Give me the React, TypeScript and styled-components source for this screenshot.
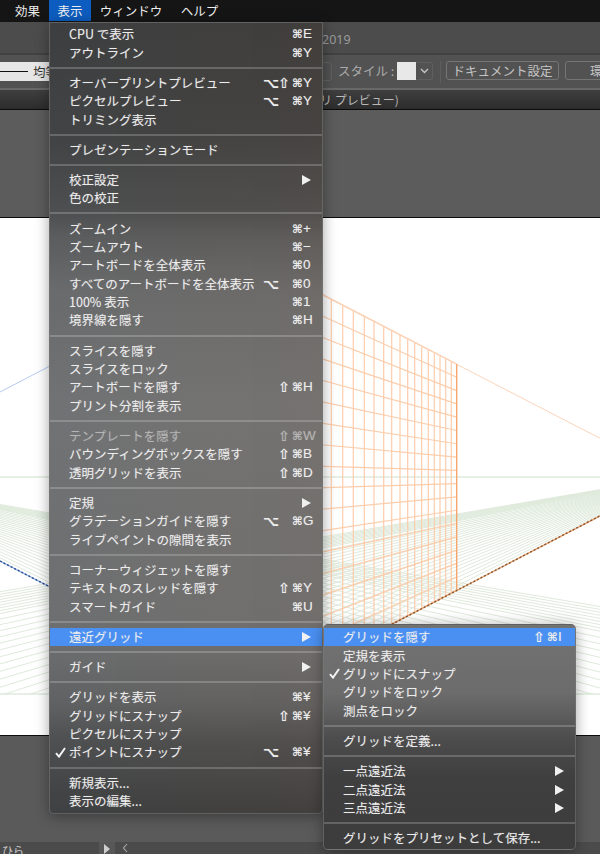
import React from "react";
import styled, { createGlobalStyle } from "styled-components";

const Global = createGlobalStyle`
  html, body { margin: 0; padding: 0; background: #5c5c5c; }
  body { font-family: "Noto Sans CJK JP", "Noto Sans", sans-serif; }
`;

const Page = styled.div`
  position: relative;
  width: 600px;
  height: 854px;
  overflow: hidden;
  display: flex;
  flex-direction: column;
  background: #5c5c5c;
`;

const MenuBar = styled.div`
  height: 22px;
  flex: none;
  display: flex;
  background: #151515;
  padding-left: 6px;
`;

const BarItem = styled.div<{ $active?: boolean; $w: number }>`
  width: ${(p) => p.$w}px;
  flex: none;
  text-align: center;
  font-size: 12.5px;
  line-height: 21px;
  height: 21px;
  color: #eeeeee;
  background: ${(p) => (p.$active ? "#0d5dc0" : "transparent")};
`;

const TitleRow = styled.div`
  height: 33px;
  flex: none;
  box-sizing: border-box;
  padding: 9px 0 0 322px;
  background: #4c4c4c;
  border-bottom: 2px solid #414141;
  font-family: "Noto Sans", sans-serif;
  font-size: 12.5px;
  line-height: 17px;
  color: #9b9b9b;
`;

const ControlBar = styled.div`
  height: 35px;
  flex: none;
  box-sizing: border-box;
  padding: 6px 0 0;
  display: flex;
  align-items: flex-start;
  overflow: hidden;
  background: #525252;
  border-bottom: 2px solid #686868;
  color: #bdbdbd;
  font-size: 12.5px;
`;

const StrokeBox = styled.div`
  width: 70px;
  height: 19px;
  flex: none;
  margin-top: 1px;
  display: flex;
  align-items: center;
  gap: 5px;
  background: #e6e6e6;
  color: #333333;
  overflow: hidden;
  white-space: nowrap;
`;

const StrokeLine = styled.span`
  width: 28px;
  height: 1.5px;
  flex: none;
  background: #111111;
`;

const SmallSelect = styled.div`
  width: 22px;
  height: 19px;
  flex: none;
  box-sizing: border-box;
  margin: 1px 0 0 240px;
  border: 1px solid #626262;
  border-radius: 0 3px 3px 0;
`;

const StyleLabel = styled.span`
  flex: none;
  width: 59px;
  margin-left: 6px;
  line-height: 20px;
  white-space: nowrap;
  color: #ababab;
`;

const Swatch = styled.span`
  width: 19px;
  height: 18px;
  flex: none;
  margin-top: 1px;
  background: #e8e8e8;
`;

const SwatchMenu = styled.span`
  width: 17px;
  height: 18px;
  flex: none;
  box-sizing: border-box;
  margin-top: 1px;
  border: 1px solid #5f5f5f;
  border-left: none;
  border-radius: 0 3px 3px 0;
  display: flex;
  align-items: center;
  justify-content: center;
`;

const Divider = styled.span`
  width: 1px;
  height: 22px;
  flex: none;
  margin: 0 5px 0 7px;
  background: #5e5e5e;
`;

const ToolButton = styled.div<{ $w: number }>`
  width: ${(p) => p.$w}px;
  height: 19px;
  flex: none;
  box-sizing: border-box;
  margin: 0 6px 0 0;
  border: 1px solid #757575;
  border-radius: 3px;
  text-align: center;
  font-size: 12.5px;
  line-height: 17px;
  color: #c4c4c4;
  white-space: nowrap;
`;

const TabBar = styled.div`
  height: 20px;
  flex: none;
  box-sizing: border-box;
  padding-left: 320px;
  background: linear-gradient(#3f3f3f, #2c2c2c);
  border-bottom: 1px solid #0c0c0c;
  font-size: 12px;
  line-height: 19px;
  color: #b9b9b9;
  white-space: nowrap;
`;

const CanvasTop = styled.div`
  height: 108px;
  flex: none;
  box-sizing: border-box;
  background: #5c5c5c;
  border-bottom: 1px solid #0c0c0c;
`;

const Artboard = styled.div`
  height: 518px;
  flex: none;
  box-sizing: border-box;
  background: #ffffff;
  border-bottom: 1px solid #0c0c0c;
  svg { display: block; }
`;

const CanvasBottom = styled.div`
  flex: 1;
  background: #5a5a5a;
`;

const StatusBar = styled.div`
  height: 12px;
  flex: none;
  display: flex;
  overflow: hidden;
  background: #4b4b4b;
  color: #c9c9c9;
  font-size: 11px;
`;

const StatusText = styled.span`
  width: 99px;
  flex: none;
  padding-left: 2px;
  box-sizing: border-box;
  line-height: 16px;
`;

const StatusPlay = styled.span`
  width: 16px;
  flex: none;
  background: #575757;
  display: flex;
  align-items: center;
  justify-content: center;
`;

const PlayMark = styled.span`
  width: 0;
  height: 0;
  margin-top: 2px;
  border-left: 6px solid #cfcfcf;
  border-top: 5px solid transparent;
  border-bottom: 5px solid transparent;
`;

const StatusBack = styled.span`
  margin-left: 7px;
  display: flex;
  align-items: center;
`;

const Panel = styled.div`
  position: absolute;
  box-sizing: border-box;
  box-shadow: 0 2px 14px rgba(0, 0, 0, 0.36);
  border: 1px solid rgba(120, 120, 120, 0.6);
`;

const MainMenu = styled(Panel)`
  left: 49px;
  top: 22px;
  width: 274px;
  height: 792px;
  padding-top: 2px;
  border-radius: 0 0 5px 5px;
  background:
    linear-gradient(90deg, rgba(90, 115, 135, 0.07), rgba(150, 115, 85, 0.08)),
    linear-gradient(
      #3a3a3a 0%,
      #3f3f3f 14%,
      #4c4c4c 24%,
      #5a5a5a 27%,
      #6a6a6a 34%,
      #727272 48%,
      #6e6e6e 78%,
      #606060 86%,
      #4c4c4c 91%,
      #3c3c3c 100%
    );
`;

const SubMenu = styled(Panel)`
  left: 323px;
  top: 624px;
  width: 253px;
  height: 226px;
  padding-top: 3px;
  border-radius: 5px;
  background: linear-gradient(
    #727272 0%,
    #6c6c6c 30%,
    #5e5e5e 40%,
    #4d4d4d 50%,
    #3f3f3f 68%,
    #3c3c3c 100%
  );
`;

const Row = styled.div<{ $on?: boolean; $off?: boolean }>`
  height: 18.4px;
  display: flex;
  align-items: center;
  padding-right: 11px;
  font-size: 12.5px;
  line-height: 18px;
  white-space: nowrap;
  text-shadow: 0 0 1px rgba(255, 255, 255, 0.3);
  color: ${(p) => (p.$off ? "rgba(255,255,255,0.32)" : "#ececec")};
  background: ${(p) => (p.$on ? "#4a90f2" : "transparent")};
`;

const CheckCell = styled.span`
  width: 19px;
  flex: none;
  display: flex;
  justify-content: center;
  padding-left: 1px;
  box-sizing: border-box;
`;

const Label = styled.span`
  flex: 1;
`;

const Shortcut = styled.span<{ $tail: number; $key: number }>`
  display: grid;
  grid-template-columns: 15px 14px 11px ${(p) => p.$key}px;
  margin-right: ${(p) => p.$tail}px;
  line-height: 18px;
`;

const ModKey = styled.span<{ $size: number }>`
  font-family: "DejaVu Sans", sans-serif;
  font-size: ${(p) => p.$size}px;
  font-weight: 700;
  line-height: 18px;
  overflow: visible;
`;

const KeyCap = styled.span`
  font-family: "Liberation Sans", sans-serif;
  font-size: 13.5px;
  font-weight: 400;
`;

const Arrow = styled.span`
  width: 0;
  height: 0;
  border-left: 9px solid #f0f0f0;
  border-top: 5px solid transparent;
  border-bottom: 5px solid transparent;
`;

const Sep = styled.div`
  height: 11.8px;
  display: flex;
  align-items: center;
  &::after {
    content: "";
    display: block;
    width: 100%;
    height: 2px;
    background: rgba(255, 255, 255, 0.2);
  }
`;

type Item = {
  t: string;
  k?: string;
  arrow?: boolean;
  check?: boolean;
  on?: boolean;
  off?: boolean;
};

const mainGroups: Item[][] = [
  [{ t: "CPU で表示", k: "⌘E" }, { t: "アウトライン", k: "⌘Y" }],
  [
    { t: "オーバープリントプレビュー", k: "⌥⇧⌘Y" },
    { t: "ピクセルプレビュー", k: "⌥⌘Y" },
    { t: "トリミング表示" },
  ],
  [{ t: "プレゼンテーションモード" }],
  [{ t: "校正設定", arrow: true }, { t: "色の校正" }],
  [
    { t: "ズームイン", k: "⌘+" },
    { t: "ズームアウト", k: "⌘−" },
    { t: "アートボードを全体表示", k: "⌘0" },
    { t: "すべてのアートボードを全体表示", k: "⌥⌘0" },
    { t: "100% 表示", k: "⌘1" },
    { t: "境界線を隠す", k: "⌘H" },
  ],
  [
    { t: "スライスを隠す" },
    { t: "スライスをロック" },
    { t: "アートボードを隠す", k: "⇧⌘H" },
    { t: "プリント分割を表示" },
  ],
  [
    { t: "テンプレートを隠す", k: "⇧⌘W", off: true },
    { t: "バウンディングボックスを隠す", k: "⇧⌘B" },
    { t: "透明グリッドを表示", k: "⇧⌘D" },
  ],
  [
    { t: "定規", arrow: true },
    { t: "グラデーションガイドを隠す", k: "⌥⌘G" },
    { t: "ライブペイントの隙間を表示" },
  ],
  [
    { t: "コーナーウィジェットを隠す" },
    { t: "テキストのスレッドを隠す", k: "⇧⌘Y" },
    { t: "スマートガイド", k: "⌘U" },
  ],
  [{ t: "遠近グリッド", arrow: true, on: true }],
  [{ t: "ガイド", arrow: true }],
  [
    { t: "グリッドを表示", k: "⌘¥" },
    { t: "グリッドにスナップ", k: "⇧⌘¥" },
    { t: "ピクセルにスナップ" },
    { t: "ポイントにスナップ", k: "⌥⌘¥", check: true },
  ],
  [{ t: "新規表示..." }, { t: "表示の編集..." }],
];

const subGroups: Item[][] = [
  [
    { t: "グリッドを隠す", k: "⇧⌘I", on: true },
    { t: "定規を表示" },
    { t: "グリッドにスナップ", check: true },
    { t: "グリッドをロック" },
    { t: "測点をロック" },
  ],
  [{ t: "グリッドを定義..." }],
  [
    { t: "一点遠近法", arrow: true },
    { t: "二点遠近法", arrow: true },
    { t: "三点遠近法", arrow: true },
  ],
  [{ t: "グリッドをプリセットとして保存..." }],
];

const Check = () => (
  <svg width="11" height="11" viewBox="0 0 11 11">
    <path d="M1 6.2 L4 9.6 L10 1" fill="none" stroke="#f2f2f2" strokeWidth="2" />
  </svg>
);

const Keys = ({ k, tail, keyW }: { k: string; tail: number; keyW: number }) => {
  const chars = Array.from(k);
  return (
    <Shortcut $tail={tail} $key={keyW}>
      <ModKey $size={14}>{chars.includes("⌥") ? "⌥" : ""}</ModKey>
      <ModKey $size={14}>{chars.includes("⇧") ? "⇧" : ""}</ModKey>
      <ModKey $size={11.5}>⌘</ModKey>
      <KeyCap>{chars[chars.length - 1]}</KeyCap>
    </Shortcut>
  );
};

const MenuList = ({ groups, tail, keyW }: { groups: Item[][]; tail: number; keyW: number }) => (
  <>
    {groups.map((g, i) => (
      <React.Fragment key={i}>
        {i > 0 && <Sep />}
        {g.map((it) => (
          <Row key={it.t} $on={it.on} $off={it.off}>
            <CheckCell>{it.check && <Check />}</CheckCell>
            <Label>{it.t}</Label>
            {it.k && <Keys k={it.k} tail={tail} keyW={keyW} />}
            {it.arrow && <Arrow />}
          </Row>
        ))}
      </React.Fragment>
    ))}
  </>
);

const RX = 675;
const LX = -162;
const HY = 477;

const slopes: number[] = [];
for (let s = 0.17; s < 0.525; s *= s < 0.2 ? 1.022 : 1.04) slopes.push(s);

const wallXs = [
  331.3, 342.7, 353.3, 364.3, 374, 383.7, 391.7, 400, 407.7, 414.7, 421.7, 428.3, 434.3, 440,
  445.7, 451.3,
];

const Drawing = () => {
  const edgeX = 456.7;
  const topAt = (x: number) => HY - 0.516 * (RX - x);
  const botAt = (x: number) => HY + 0.518 * (RX - x);
  const rows = Array.from({ length: 18 }, (_, i) => 364 + (i * 226) / 17);
  return (
    <svg width="600" height="517" viewBox="0 218 600 517">
      <defs>
        <clipPath id="floor">
          <rect x="0" y="477" width="600" height="217" />
        </clipPath>
      </defs>
      <g clipPath="url(#floor)" stroke="#dfeadc" strokeWidth="1" fill="none">
        {slopes.map((s) => (
          <path key={`r${s}`} d={`M${RX} ${HY} L-20 ${HY + s * (RX + 20)}`} />
        ))}
        {slopes.map((s) => (
          <path key={`l${s}`} d={`M${LX} ${HY} L620 ${HY + s * (620 - LX)}`} />
        ))}
      </g>
      <path d="M0 477 H600 M0 694 H600" stroke="#cde0ca" strokeWidth="1" fill="none" />
      <g stroke="#fccdab" strokeWidth="1.2" fill="none">
        {wallXs.map((x) => (
          <path key={x} d={`M${x} ${topAt(x)} V${botAt(x)}`} />
        ))}
        {rows.map((y) => (
          <path key={y} d={`M${edgeX} ${y} L300 ${HY + ((y - HY) * (RX - 300)) / (RX - edgeX)}`} />
        ))}
      </g>
      <path d={`M300 ${topAt(300)} L600 ${topAt(600)}`} stroke="#fcd5ba" strokeWidth="1" />
      <path d={`M${edgeX} ${topAt(edgeX)} V${botAt(edgeX)}`} stroke="#f6a266" strokeWidth="1.3" />
      <path d={`M257 694.5 L600 ${botAt(600)}`} stroke="#f0a162" strokeWidth="1.4" />
      <path
        d={`M257 694.5 L600 ${botAt(600)}`}
        stroke="#7d5a45"
        strokeWidth="1.4"
        strokeDasharray="2 2"
      />
      <path d="M0 392 L49 366.5" stroke="#b4cbf0" strokeWidth="1" />
      <path d="M0 561 L257 694.5" stroke="#8fb0e6" strokeWidth="1.4" />
      <path d="M0 561 L257 694.5" stroke="#2c4f8f" strokeWidth="1.4" strokeDasharray="2 2" />
    </svg>
  );
};

export default function App() {
  return (
    <Page>
      <Global />
      <MenuBar>
        <BarItem $w={43}>効果</BarItem>
        <BarItem $w={42} $active>
          表示
        </BarItem>
        <BarItem $w={80}>ウィンドウ</BarItem>
        <BarItem $w={57}>ヘルプ</BarItem>
      </MenuBar>
      <TitleRow>2019</TitleRow>
      <ControlBar>
        <StrokeBox>
          <StrokeLine />
          均等
        </StrokeBox>
        <SmallSelect />
        <StyleLabel>スタイル :</StyleLabel>
        <Swatch />
        <SwatchMenu>
          <svg width="9" height="6" viewBox="0 0 9 6">
            <path d="M1 1 L4.5 4.5 L8 1" fill="none" stroke="#c8c8c8" strokeWidth="1.3" />
          </svg>
        </SwatchMenu>
        <Divider />
        <ToolButton $w={113}>ドキュメント設定</ToolButton>
        <ToolButton $w={100}>環境設定</ToolButton>
      </ControlBar>
      <TabBar>リ プレビュー)</TabBar>
      <CanvasTop />
      <Artboard>
        <Drawing />
      </Artboard>
      <CanvasBottom />
      <StatusBar>
        <StatusText>ひら</StatusText>
        <StatusPlay>
          <PlayMark />
        </StatusPlay>
        <StatusBack>
          <svg width="6" height="10" viewBox="0 0 6 10">
            <path d="M5 1 L1.5 5 L5 9" fill="none" stroke="#aaaaaa" strokeWidth="1.1" />
          </svg>
        </StatusBack>
      </StatusBar>
      <MainMenu>
        <MenuList groups={mainGroups} tail={-6} keyW={14} />
      </MainMenu>
      <SubMenu>
        <MenuList groups={subGroups} tail={-2} keyW={8} />
      </SubMenu>
    </Page>
  );
}
